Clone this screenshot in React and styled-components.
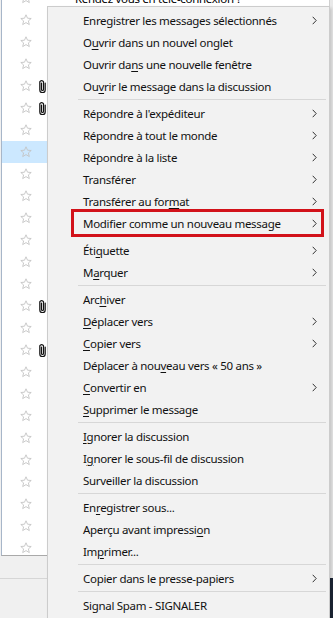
import React from 'react';
import styled, { createGlobalStyle } from 'styled-components';

const GlobalStyle = createGlobalStyle`
  html, body {
    margin: 0;
    padding: 0;
    background: #f0f0f0;
  }
  body {
    font-family: "Noto Sans", "Open Sans", sans-serif;
    font-size: 11.5px;
    letter-spacing: -0.3px;
    color: #000;
  }
`;

const Screen = styled.div`
  position: relative;
  width: 333px;
  height: 618px;
  overflow: hidden;
  background: #f0f0f0;
  display: flex;
  flex-direction: column;
`;

const Body = styled.div`
  display: flex;
  flex: 1;
`;

const Main = styled.div`
  flex: 1;
  display: flex;
  flex-direction: column;
`;

const ListPanel = styled.div`
  height: 556px;
  margin-left: 1px;
  border-left: 1px solid #a7b6c9;
  border-bottom: 1px solid #a9a9a9;
  background: #fff;
  overflow: hidden;
  box-sizing: border-box;
`;

const Rows = styled.div`
  margin-top: -13px;
`;

const Row = styled.div`
  height: 22px;
  display: flex;
  align-items: center;
  background: ${p => (p.selected ? '#cce8ff' : 'transparent')};
  width: ${p => (p.selected ? '45px' : 'auto')};
`;

const StarCell = styled.div`
  width: 36px;
  display: flex;
  justify-content: center;
  padding-left: 12px;
  box-sizing: border-box;
`;

const ClipCell = styled.div`
  width: 9px;
  display: flex;
  justify-content: center;
`;

const Subject = styled.span`
  margin-left: 28px;
  white-space: nowrap;
`;

const StatusBar = styled.div`
  height: 22px;
  border-bottom: 1px solid #d6d6d6;
`;

const EdgeStrip = styled.div`
  width: 3px;
  display: flex;
  flex-direction: column;
  border-left: 1px solid #d0d0d0;
`;

const EdgeTop = styled.div`
  height: 578px;
  background: #e9e9e9;
`;

const EdgeBottom = styled.div`
  flex: 1;
  background: #1c2635;
`;

const Menu = styled.div`
  position: absolute;
  left: 47px;
  top: 6px;
  width: 283px;
  padding: 2px 0;
  background: #f2f2f2;
  border: 1px solid #cccccc;
  box-sizing: border-box;
  box-shadow: 2px 2px 3px rgba(0, 0, 0, 0.15);
`;

const Item = styled.div`
  position: relative;
  height: 22px;
  display: flex;
  align-items: center;
  padding-left: 35px;
  padding-right: 12px;
  white-space: nowrap;
  color: #111;
  margin-bottom: ${p => (p.boxed ? '5px' : '0')};

  &::after {
    content: '';
    display: ${p => (p.boxed ? 'block' : 'none')};
    position: absolute;
    left: 23px;
    right: 5px;
    top: -3px;
    bottom: -3px;
    border: 3px solid #d2121a;
  }
`;

const Label = styled.span`
  flex: 1;
`;

const Key = styled.span`
  text-decoration: underline;
  text-underline-offset: 2px;
  text-decoration-thickness: 1px;
`;

const Separator = styled.div`
  height: 5px;
  display: flex;
  align-items: center;
  margin-left: 30px;
  margin-right: 3px;

  &::before {
    content: '';
    flex: 1;
    height: 1px;
    background: #d7d7d7;
  }
`;

const Star = () => (
  <svg width="12" height="12" viewBox="0 0 12 12">
    <path
      d="M6 0.8 L7.5 4.2 L11.2 4.5 L8.4 6.9 L9.3 10.6 L6 8.6 L2.7 10.6 L3.6 6.9 L0.8 4.5 L4.5 4.2 Z"
      fill="none"
      stroke="#c4c4c4"
      strokeWidth="0.9"
      strokeLinejoin="round"
    />
  </svg>
);

const Clip = () => (
  <svg width="7" height="14" viewBox="0 0 7 14">
    <path
      d="M2.5 4 V10.5 A1 1 0 0 0 4.5 10.5 V2.8 A2 2 0 0 0 0.8 2.8 V11 A2.7 2.7 0 0 0 6.2 11 V4"
      fill="none"
      stroke="#111"
      strokeWidth="1.2"
      strokeLinecap="round"
    />
  </svg>
);

const Chevron = () => (
  <svg width="5" height="9" viewBox="0 0 5 9">
    <polyline points="0.7,0.8 4.2,4.5 0.7,8.2" fill="none" stroke="#333" strokeWidth="1" />
  </svg>
);

const clips = [4, 5, 14, 16];

const menu = [
  { label: ['Enregistrer les messages sélectionnés'], sub: true },
  { label: ['O', 'u', 'vrir dans un nouvel onglet'] },
  { label: ['Ouvrir da', 'n', 's une nouvelle fenêtre'] },
  { label: ['Ou', 'v', 'rir le message dans la discussion'] },
  'sep',
  { label: ["Répondre à l'expéditeur"], sub: true },
  { label: ['Répondre à tout le monde'], sub: true },
  { label: ['Répondre à la liste'], sub: true },
  { label: ['Transférer'], sub: true },
  { label: ['Transférer au for', 'm', 'at'], sub: true },
  { label: ['Modifier comme un nouveau message'], sub: true, boxed: true },
  { label: ['Éti', 'q', 'uette'], sub: true },
  { label: ['M', 'a', 'rquer'], sub: true },
  'sep',
  { label: ['Arc', 'h', 'iver'] },
  { label: ['', 'D', 'éplacer vers'], sub: true },
  { label: ['', 'C', 'opier vers'], sub: true },
  { label: ['Déplacer à nou', 'v', 'eau vers « 50 ans »'] },
  { label: ['', 'C', 'onvertir en'], sub: true },
  { label: ['', 'S', 'upprimer le message'] },
  'sep',
  { label: ['', 'I', 'gnorer la discussion'] },
  { label: ['I', 'g', 'norer le sous-fil de discussion'] },
  { label: ['Surveiller la discussion'] },
  'sep',
  { label: ['En', 'r', 'egistrer sous...'] },
  { label: ['Aperçu avant impressi', 'o', 'n'] },
  { label: ['Im', 'p', 'rimer...'] },
  'sep',
  { label: ['Copier dans le presse-papiers'], sub: true },
  'sep',
  { label: ['Signal Spam - SIGNALER'] },
];

export default function App() {
  return (
    <Screen>
      <GlobalStyle />
      <Body>
        <Main>
          <ListPanel>
            <Rows>
              {Array.from({ length: 26 }).map((_, i) => (
                <Row key={i} selected={i === 7}>
                  <StarCell><Star /></StarCell>
                  <ClipCell>{clips.includes(i) && <Clip />}</ClipCell>
                  {i === 0 && <Subject>Rendez vous en télé-connexion ?</Subject>}
                </Row>
              ))}
            </Rows>
          </ListPanel>
          <StatusBar />
        </Main>
        <EdgeStrip>
          <EdgeTop />
          <EdgeBottom />
        </EdgeStrip>
      </Body>

      <Menu>
        {menu.map((m, i) =>
          m === 'sep' ? (
            <Separator key={i} />
          ) : (
            <Item key={i} boxed={m.boxed}>
              <Label>
                {m.label[0]}
                {m.label[1] && <Key>{m.label[1]}</Key>}
                {m.label[2]}
              </Label>
              {m.sub && <Chevron />}
            </Item>
          )
        )}
      </Menu>
    </Screen>
  );
}
